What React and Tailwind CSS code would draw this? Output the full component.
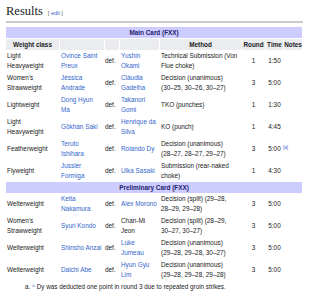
import React from "react";

const mainCard = [
  ["Light Heavyweight", "Ovince Saint Preux", "Yushin Okami", true, "Technical Submission (Von Flue choke)", "1", "1:50", ""],
  ["Women's Strawweight", "Jéssica Andrade", "Cláudia Gadelha", true, "Decision (unanimous) (30–25, 30–26, 30–27)", "3", "5:00", ""],
  ["Lightweight", "Dong Hyun Ma", "Takanori Gomi", true, "TKO (punches)", "1", "1:30", ""],
  ["Light Heavyweight", "Gökhan Saki", "Henrique da Silva", true, "KO (punch)", "1", "4:45", ""],
  ["Featherweight", "Teruto Ishihara", "Rolando Dy", true, "Decision (unanimous) (28–27, 28–27, 29–27)", "3", "5:00", "[a]"],
  ["Flyweight", "Jussier Formiga", "Ulka Sasaki", true, "Submission (rear-naked choke)", "1", "4:30", ""],
];

const prelimCard = [
  ["Welterweight", "Keita Nakamura", "Alex Morono", true, "Decision (split) (29–28, 28–29, 29–28)", "3", "5:00", ""],
  ["Women's Strawweight", "Syuri Kondo", "Chan-Mi Jeon", false, "Decision (split) (28–29, 30–27, 30–27)", "3", "5:00", ""],
  ["Welterweight", "Shinsho Anzai", "Luke Jumeau", true, "Decision (unanimous) (29–28, 29–28, 30–27)", "3", "5:00", ""],
  ["Welterweight", "Daichi Abe", "Hyun Gyu Lim", true, "Decision (unanimous) (29–28, 29–28, 29–28)", "3", "5:00", ""],
];

// keep score pairs like 30–25 together
const noDashBreak = (text) => text.replace(/–/g, "\u2060–\u2060");

const CardBar = ({ title }) => (
  <tr>
    <th colSpan={8} className="bg-[#ccccff] text-[#1c1c6e] font-bold text-center h-[11px] p-0">
      {title}
    </th>
  </tr>
);

const FightRow = ({ fight }) => {
  const [weight, winner, loser, loserLink, method, round, time, note] = fight;
  return (
    <tr className="align-middle">
      <td className="px-[1px] py-[1px]">{weight}</td>
      <td className="px-[1px] py-[1px] text-[#3366cc]">{winner}</td>
      <td className="px-0 py-[1px]">def.</td>
      <td className={"px-[1px] py-[1px] " + (loserLink ? "text-[#3366cc]" : "")}>{loser}</td>
      <td className="px-[1px] py-[1px]">{noDashBreak(method)}</td>
      <td className="px-[1px] py-[1px] text-center">{round}</td>
      <td className="px-[1px] py-[1px] text-center">{time}</td>
      <td className="px-0 py-[1px]">
        {note && <sup className="text-[#3366cc] text-[4.5px] -ml-[1px]">{note}</sup>}
      </td>
    </tr>
  );
};

const App = () => {
  return (
    <div className="w-[309px] h-[300px] overflow-hidden bg-white text-[#202122] font-['Liberation_Sans',Arial,sans-serif]">
      <div className="px-[6px] pt-[3px]">
        <h2 className="flex items-baseline gap-[5px] border-b-[2px] border-[#c8ccd1] pb-[1px]">
          <span className="font-['Liberation_Serif',serif] text-[12.5px] leading-[17px]">Results</span>
          <span className="text-[5.5px] text-[#54595d]">
            [ <span className="text-[#3366cc]">edit</span> ]
          </span>
        </h2>

        <table className="table-fixed border-separate border-spacing-x-[1px] border-spacing-y-0 w-[298px] -ml-[1px] mt-[4px] text-[6.4px] leading-[10px]">
          <colgroup>
            <col className="w-[53px]" />
            <col className="w-[44px]" />
            <col className="w-[14px]" />
            <col className="w-[39px]" />
            <col className="w-[81px]" />
            <col className="w-[23px]" />
            <col className="w-[17px]" />
            <col className="w-[18px]" />
          </colgroup>
          <tbody>
            <CardBar title="Main Card (FXX)" />
            <tr>
              <th className="bg-[#eaecf0] font-bold h-[12px] p-0 border-t border-white">Weight class</th>
              <th className="bg-[#eaecf0] p-0 border-t border-white"></th>
              <th className="bg-[#eaecf0] p-0 border-t border-white"></th>
              <th className="bg-[#eaecf0] p-0 border-t border-white"></th>
              <th className="bg-[#eaecf0] font-bold p-0 border-t border-white">Method</th>
              <th className="bg-[#eaecf0] font-bold p-0 border-t border-white">Round</th>
              <th className="bg-[#eaecf0] font-bold p-0 border-t border-white">Time</th>
              <th className="bg-[#eaecf0] font-bold p-0 border-t border-white">Notes</th>
            </tr>
            {mainCard.map((fight, i) => (
              <FightRow key={i} fight={fight} />
            ))}
            <CardBar title="Preliminary Card (FXX)" />
            {prelimCard.map((fight, i) => (
              <FightRow key={i} fight={fight} />
            ))}
          </tbody>
        </table>

        <p className="text-[6.3px] leading-[10px] mt-[1px] pl-[19px]">
          a. <span className="text-[#3366cc]">^</span> Dy was deducted one point in round 3 due to repeated groin strikes.
        </p>
      </div>
    </div>
  );
};

export default App;
